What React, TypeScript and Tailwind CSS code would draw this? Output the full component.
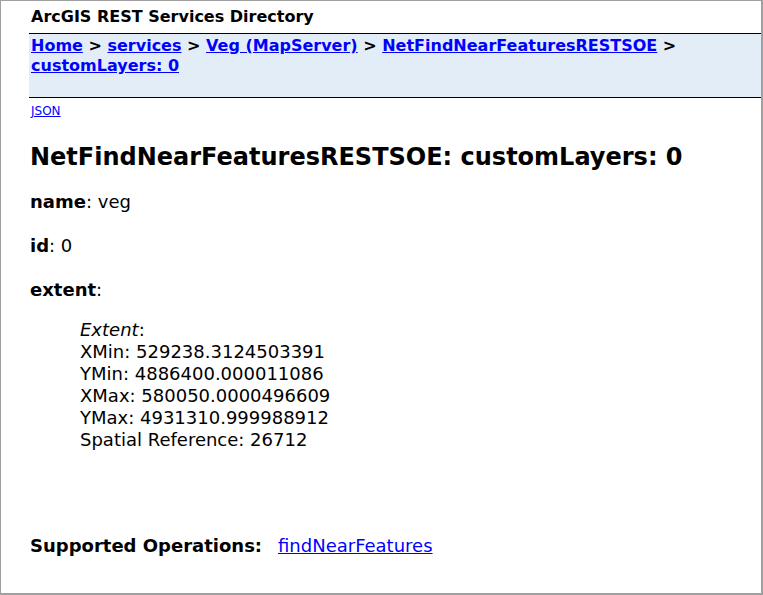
export default function App() {
  const extent = [
    'XMin: 529238.3124503391',
    'YMin: 4886400.000011086',
    'XMax: 580050.0000496609',
    'YMax: 4931310.999988912',
    'Spatial Reference: 26712',
  ];

  return (
    <div className="h-[595px] w-[763px] overflow-hidden border border-r-2 border-b-2 border-[#a0a0a0] bg-white font-['DejaVu_Sans',sans-serif] text-black">
      <div className="pl-[30px] pt-[6px] text-[16px] font-bold leading-[20px]">
        ArcGIS REST Services Directory
      </div>

      <div className="ml-[28px] mt-[6px] h-[65px] border-y border-black bg-[#e3edf7] px-[2px] pt-[2px] text-[16px] font-bold leading-[20px]">
        <a href="#" className="text-[#0000ff] underline">Home</a>
        {' > '}
        <a href="#" className="text-[#0000ff] underline">services</a>
        {' > '}
        <a href="#" className="text-[#0000ff] underline">Veg (MapServer)</a>
        {' > '}
        <a href="#" className="text-[#0000ff] underline">NetFindNearFeaturesRESTSOE</a>
        {' > '}
        <br />
        <a href="#" className="text-[#0000ff] underline">customLayers: 0</a>
      </div>

      <div className="pl-[30px] pt-[6px] text-[12px] leading-[15px]">
        <a href="#" className="text-[#0000ff] underline">JSON</a>
      </div>

      <h2 className="pl-[29px] pt-[23px] text-[24px] font-bold leading-[30px]">
        NetFindNearFeaturesRESTSOE: customLayers: 0
      </h2>

      <div className="flex flex-col gap-[24px] pl-[29px] pt-[20px] text-[18px] leading-[20px]">
        <div><b>name</b>: veg</div>
        <div><b>id</b>: 0</div>
        <div><b>extent</b>:</div>
      </div>

      <div className="pl-[79px] pt-[19px] text-[18px] leading-[22px]">
        <div><i>Extent</i>:</div>
        {extent.map((line) => (
          <div key={line}>{line}</div>
        ))}
      </div>

      <div className="flex items-baseline pl-[29px] pt-[84px] text-[18px] leading-[22px]">
        <span className="w-[248px] font-bold">Supported Operations:</span>
        <a href="#" className="text-[#0000ff] underline">findNearFeatures</a>
      </div>
    </div>
  );
}
